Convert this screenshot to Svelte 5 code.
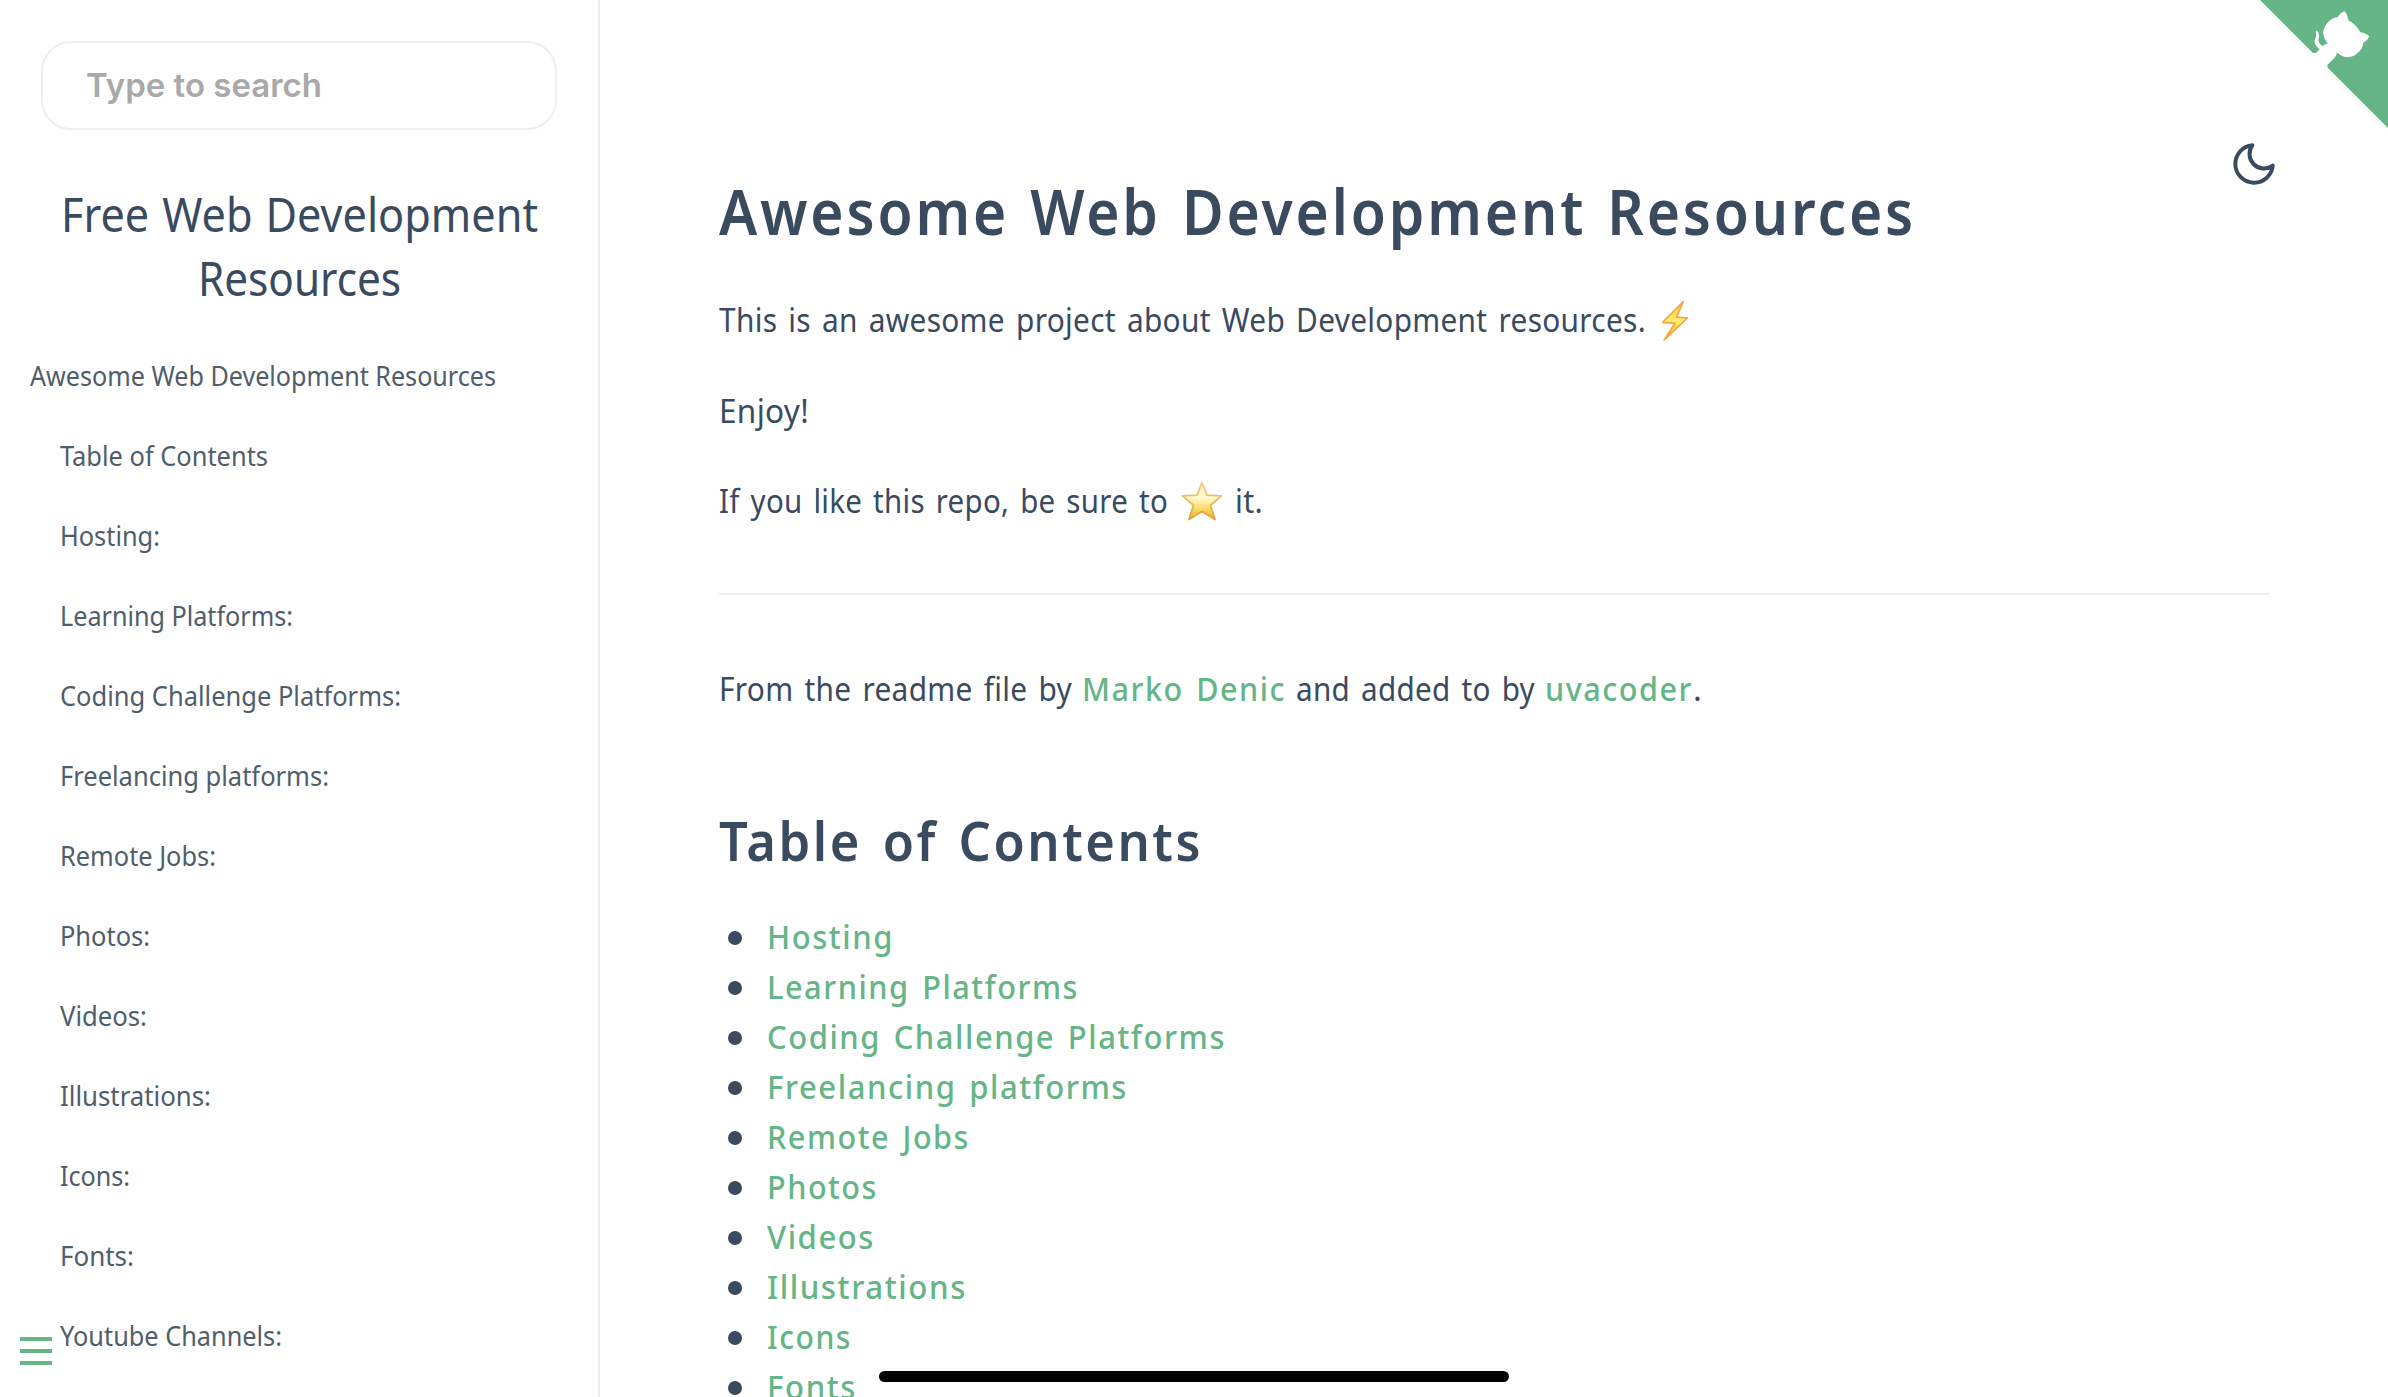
<script>
  const sections = [
    ['Table of Contents', 208],
    ['Hosting:', 100],
    ['Learning Platforms:', 233],
    ['Coding Challenge Platforms:', 341],
    ['Freelancing platforms:', 269],
    ['Remote Jobs:', 156],
    ['Photos:', 90],
    ['Videos:', 87],
    ['Illustrations:', 151],
    ['Icons:', 70],
    ['Fonts:', 74],
    ['Youtube Channels:', 222]
  ];

  const contents = [
    ['Hosting', 127],
    ['Learning Platforms', 312],
    ['Coding Challenge Platforms', 459],
    ['Freelancing platforms', 361],
    ['Remote Jobs', 203],
    ['Photos', 111],
    ['Videos', 108],
    ['Illustrations', 200],
    ['Icons', 85],
    ['Fonts', 90]
  ];

  // Condenses a run of text horizontally so that it occupies the given measure.
  function measure(node, width) {
    const natural = node.getBoundingClientRect().width;
    node.style.transform = `scaleX(${width / natural})`;
    node.style.marginRight = `${width - natural}px`;
  }
</script>

<div class="page">
  <aside class="sidebar">
    <div class="search"><span class="fit" use:measure={236}>Type to search</span></div>
    <h1 class="name">
      <span class="row"><span class="fit" use:measure={477}>Free Web Development</span></span>
      <span class="row"><span class="fit" use:measure={203}>Resources</span></span>
    </h1>
    <ul class="nav">
      <li class="top"><span class="fit" use:measure={466}>Awesome Web Development Resources</span></li>
      {#each sections as [label, width]}
        <li><span class="fit" use:measure={width}>{label}</span></li>
      {/each}
    </ul>
    <button class="toggle" aria-label="Menu"><i></i><i></i><i></i></button>
  </aside>

  <main class="content">
    <h1><span class="fit" use:measure={1197}>Awesome Web Development Resources</span></h1>
    <p>
      <span class="fit" use:measure={927}>This is an awesome project about Web Development resources.</span>
      <svg class="bolt" viewBox="0 0 29 42" aria-label="lightning">
        <defs>
          <linearGradient id="boltFill" x1="0" y1="0" x2="0" y2="1">
            <stop offset="0" stop-color="#fbc04a" />
            <stop offset=".5" stop-color="#fff06a" />
            <stop offset="1" stop-color="#f6a93b" />
          </linearGradient>
        </defs>
        <path d="M22.3 1.5 1.5 22.5 14 23.3 3.2 40 26.5 18 15.5 17.2Z" fill="url(#boltFill)" stroke="#f3a63c" stroke-width="1.7" stroke-linejoin="round" />
      </svg>
    </p>
    <p><span class="fit" use:measure={90}>Enjoy!</span></p>
    <p>
      <span class="fit" use:measure={449}>If you like this repo, be sure to</span>
      <svg class="star" viewBox="0 0 42 40" aria-label="star">
        <defs>
          <linearGradient id="starFill" x1="0" y1="0" x2="0" y2="1">
            <stop offset="0" stop-color="#fdf0b0" />
            <stop offset=".4" stop-color="#fffcd0" />
            <stop offset=".7" stop-color="#fbdc65" />
            <stop offset="1" stop-color="#eeae2e" />
          </linearGradient>
          <linearGradient id="starEdge" x1="0" y1="0" x2="0" y2="1">
            <stop offset="0" stop-color="#f0cf8c" />
            <stop offset="1" stop-color="#dfa23a" />
          </linearGradient>
        </defs>
        <path d="M21 1.5 26 14.2 40.5 14.9 29.5 24.2 34 38.5 21 30.5 8 38.5 12.5 24.2 1.5 14.9 16 14.2Z" fill="url(#starFill)" stroke="url(#starEdge)" stroke-width="1.8" stroke-linejoin="round" />
      </svg>
      <span class="fit" use:measure={28}>it.</span>
    </p>
    <hr />
    <p class="credit">
      <span class="fit" use:measure={353}>From the readme file by</span>
      <a class="fit" use:measure={204}>Marko Denic</a>
      <span class="fit" use:measure={239}>and added to by</span>
      <a class="fit" use:measure={148}>uvacoder</a><span>.</span>
    </p>
    <h2><span class="fit" use:measure={484}>Table of Contents</span></h2>
    <ul class="toc">
      {#each contents as [label, width]}
        <li><a class="fit" use:measure={width}>{label}</a></li>
      {/each}
    </ul>
  </main>

  <svg class="corner" viewBox="0 0 250 250" aria-hidden="true">
    <path d="M0,0 L115,115 L130,115 L142,142 L250,250 L250,0 Z" fill="#65b587" />
    <path d="M128.3,109.0 C113.8,99.7 119.0,89.6 119.0,89.6 C122.0,82.7 120.5,78.6 120.5,78.6 C119.2,72.0 123.4,76.3 123.4,76.3 C127.3,80.9 125.5,87.3 125.5,87.3 C122.9,97.6 130.6,101.9 134.4,103.2" fill="#fff" />
    <path d="M115.0,115.0 C114.9,115.1 118.7,116.5 119.8,115.4 L133.7,101.6 C136.9,99.2 139.9,98.4 142.2,98.6 C133.8,88.0 127.5,74.4 143.8,58.0 C148.5,53.4 154.0,51.2 159.7,51.0 C160.3,49.4 163.2,43.6 171.4,40.1 C171.4,40.1 176.1,42.5 178.8,56.2 C183.1,58.6 187.2,61.8 190.9,65.4 C194.5,69.0 197.7,73.2 200.1,77.6 C213.8,80.2 216.3,84.9 216.3,84.9 C212.7,93.1 206.9,96.0 205.4,96.6 C205.1,102.4 203.0,107.8 198.3,112.5 C181.9,128.9 168.3,122.5 157.7,114.1 C157.9,116.9 156.7,120.9 152.7,124.9 L141.0,136.5 C139.8,137.7 141.6,141.9 141.8,141.8 Z" fill="#fff" />
  </svg>
  <svg class="moon" viewBox="0 0 24 24" aria-label="Dark mode">
    <path d="M21 12.79A9 9 0 1 1 11.21 3 7 7 0 0 0 21 12.79z" fill="none" stroke="#3a4a5f" stroke-width="1.9" stroke-linecap="round" stroke-linejoin="round" />
  </svg>
  <div class="home"></div>
</div>

<style>
  :global(body) {
    margin: 0;
    overflow: hidden;
    background: #fefefe;
  }
  .page {
    position: relative;
    display: grid;
    grid-template-columns: 600px 1fr;
    height: 1397px;
    overflow: hidden;
    font-family: 'Noto Sans', sans-serif;
    color: #3a4a5f;
    background: #fefefe;
  }
  .fit {
    display: inline-block;
    white-space: nowrap;
    transform-origin: 0 50%;
  }
  h1, h2, p, ul {
    margin: 0;
    padding: 0;
    list-style: none;
  }
  .sidebar {
    box-sizing: border-box;
    height: 1397px;
    overflow: hidden;
    border-right: 2px solid #ededed;
    padding-top: 41px;
  }
  .search {
    box-sizing: border-box;
    width: 516px;
    height: 89px;
    margin-left: 41px;
    padding-left: 43px;
    border: 2px solid #eee;
    border-radius: 30px;
    font: 600 33px/85px Inter, sans-serif;
    color: #a9a9a9;
  }
  .name {
    margin-top: 51.5px;
    font-size: 46.5px;
    font-weight: 400;
    line-height: 64px;
    word-spacing: 0.04em;
  }
  .row {
    display: flex;
    justify-content: center;
  }
  .nav {
    margin-top: 26px;
    font-size: 27.5px;
    line-height: 80px;
    color: #505d6b;
  }
  .nav li {
    height: 80px;
    padding-left: 60px;
  }
  .nav .top {
    padding-left: 30px;
  }
  .toggle {
    position: absolute;
    left: 20px;
    top: 1337px;
    display: grid;
    gap: 8px;
    width: 32px;
    padding: 0;
    border: 0;
    background: none;
  }
  .toggle i {
    height: 4px;
    background: #65b587;
  }
  .content {
    padding: 171px 118px 0 119px;
    font-size: 33px;
    line-height: 50px;
  }
  .content h1 {
    height: 80px;
    margin-bottom: 44px;
    font-size: 63px;
    font-weight: 600;
    line-height: 80px;
    letter-spacing: 0.05em;
    word-spacing: 0.06em;
  }
  p {
    display: flex;
    height: 50px;
    margin-bottom: 40.5px;
    white-space: nowrap;
    letter-spacing: 0.01em;
    word-spacing: 0.1em;
  }
  .bolt {
    width: 29px;
    height: 42px;
    margin: 5px 0 0 15px;
  }
  .star {
    width: 42px;
    height: 40px;
    margin: 5px 12px 0 13px;
  }
  hr {
    height: 2px;
    margin: 66.5px 0 69px;
    border: 0;
    background: #eee;
  }
  a {
    font-weight: 500;
    letter-spacing: 0.05em;
    word-spacing: 0.1em;
    color: #65b587;
  }
  .credit {
    gap: 0 10px;
  }
  .credit > :last-child {
    margin-left: -10px;
  }
  h2 {
    height: 70px;
    margin-top: 91px;
    font-size: 55px;
    font-weight: 600;
    line-height: 70px;
    letter-spacing: 0.05em;
    word-spacing: 0.1em;
  }
  .toc {
    margin-top: 37px;
  }
  .toc li {
    display: flex;
    align-items: center;
    height: 50px;
    padding-left: 9px;
  }
  .toc li::before {
    content: '';
    width: 14px;
    height: 14px;
    margin: 2px 25px 0 0;
    border-radius: 50%;
    background: #3a4a5f;
  }
  .corner {
    position: absolute;
    top: -11px;
    right: 0;
    width: 139px;
    height: 139px;
  }
  .moon {
    position: absolute;
    left: 2229px;
    top: 139px;
    width: 50px;
    height: 50px;
  }
  .home {
    position: absolute;
    left: 879px;
    top: 1371px;
    width: 630px;
    height: 11px;
    border-radius: 6px;
    background: #000;
  }
</style>
